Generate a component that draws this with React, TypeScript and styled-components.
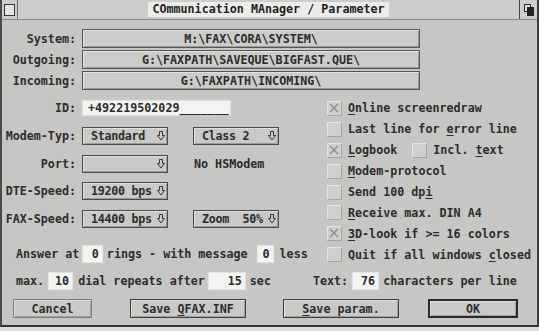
import React from 'react';
import styled, { createGlobalStyle } from 'styled-components';

const GlobalStyle = createGlobalStyle`
  html, body {
    margin: 0;
    padding: 0;
    background: #dcdcda;
  }
  body {
    font-family: "DejaVu Sans Mono", "Liberation Mono", monospace;
    font-weight: bold;
    font-size: 11.7px;
    color: #2c2c2c;
  }
`;

const Window = styled.div`
  width: 539px;
  box-sizing: border-box;
  background: #c6c6c4;
  border-left: 2px solid #4a4a4a;
  border-right: 2px solid #3c3c3c;
  border-bottom: 2px solid #333;
`;

const TitleBar = styled.div`
  height: 19px;
  display: grid;
  grid-template-columns: 16px 1fr 18px;
  background: #cdcdcb;
  border-bottom: 1px solid #8a8a88;
`;

const CloseCell = styled.div`
  display: flex;
  align-items: center;
  justify-content: center;
  border-right: 1px solid #6a6a6a;
`;

const CloseBox = styled.div`
  width: 9px;
  height: 10px;
  border: 1px solid #333;
  background: #e6e6e4;
`;

const TitleCell = styled.div`
  display: flex;
  align-items: center;
  justify-content: center;
`;

const Title = styled.div`
  height: 15px;
  line-height: 15px;
  padding: 0 4px;
  background: #ececea;
  color: #222;
  white-space: pre;
`;

const FullCell = styled.div`
  display: flex;
  align-items: center;
  justify-content: center;
  border-left: 1px solid #444;
`;

const Body = styled.div`
  padding: 9px 0 7px 0;
`;

const PathList = styled.div`
  display: flex;
  flex-direction: column;
  gap: 2px;
`;

const Row = styled.div<{ $h?: number; $mt?: number }>`
  display: flex;
  align-items: center;
  height: ${p => p.$h ?? 18}px;
  margin-top: ${p => p.$mt ?? 0}px;
  white-space: pre;
`;

const Label = styled.div`
  width: 74px;
  text-align: right;
  margin-right: 6px;
`;

const PathField = styled.div`
  width: 338px;
  height: 19px;
  box-sizing: border-box;
  display: flex;
  align-items: center;
  justify-content: center;
  background: #cbcbc9;
  border: 1px solid #555;
  box-shadow: inset 1px 1px 0 #e2e2e0, inset -1px -1px 0 #9c9c9a;
`;

const Columns = styled.div`
  display: flex;
  margin-top: 8px;
`;

const LeftCol = styled.div`
  width: 325px;
  display: flex;
  flex-direction: column;
`;

const RightCol = styled.div`
  flex: 1;
  display: flex;
  flex-direction: column;
`;

const TextInput = styled.div`
  width: 147px;
  height: 14px;
  margin-left: 1px;
  box-sizing: border-box;
  padding-left: 5px;
  display: flex;
  align-items: center;
  background: #f3f3f1;
  box-shadow: 0 0 1px 1px #e0e0de;
`;

const Popup = styled.div<{ $ml?: number }>`
  width: 86px;
  height: 18px;
  margin-left: ${p => p.$ml ?? 0}px;
  box-sizing: border-box;
  padding: 0 2px 0 8px;
  display: flex;
  align-items: center;
  justify-content: space-between;
  background: #c9c9c7;
  border: 1px solid #4a4a4a;
  box-shadow: inset 1px 1px 0 #dedede, inset -1px -1px 0 #9a9a98;
`;

const PopupText = styled.span`
  letter-spacing: -0.3px;
`;

const Note = styled.div<{ $ml?: number }>`
  margin-left: ${p => p.$ml ?? 0}px;
`;

const Text = styled.span<{ $ml?: number }>`
  margin-left: ${p => p.$ml ?? 0}px;
  white-space: pre;
`;

const NumBox = styled.div<{ $w: number; $ml?: number }>`
  width: ${p => p.$w}px;
  height: 16px;
  margin-left: ${p => p.$ml ?? 0}px;
  box-sizing: border-box;
  padding-right: 3px;
  display: flex;
  align-items: center;
  justify-content: flex-end;
  background: #f3f3f1;
  box-shadow: 0 0 1px 1px #e2e2e0;
`;

const CheckRow = styled.div`
  height: 20.9px;
  display: flex;
  align-items: center;
  white-space: pre;
`;

const Box = styled.div<{ $ml?: number }>`
  width: 15px;
  height: 15px;
  margin-left: ${p => p.$ml ?? 0}px;
  margin-right: 6px;
  box-sizing: border-box;
  background: #d0d0ce;
  border-top: 1px solid #e6e6e4;
  border-left: 1px solid #e6e6e4;
  border-right: 1px solid #a4a4a2;
  border-bottom: 1px solid #a4a4a2;
  display: flex;
  align-items: center;
  justify-content: center;
`;

const U = styled.span`
  text-decoration: underline;
  text-underline-offset: 2px;
  text-decoration-thickness: 1px;
`;

const Sentence = styled.div`
  display: flex;
  align-items: center;
  height: 17px;
  margin-top: 7px;
  padding-left: 14px;
  white-space: pre;
`;

const ButtonRow = styled.div`
  display: flex;
  align-items: center;
  height: 19px;
  margin-top: 10px;
  padding-left: 11px;
`;

const Button = styled.div<{ $w: number; $ml?: number; $kind?: 'soft' | 'default' }>`
  width: ${p => p.$w}px;
  height: 19px;
  margin-left: ${p => p.$ml ?? 0}px;
  box-sizing: border-box;
  display: flex;
  align-items: center;
  justify-content: center;
  white-space: pre;
  background: #c9c9c7;
  border: ${p => (p.$kind === 'default' ? '2px solid #2a2a2a' : p.$kind === 'soft' ? '1px solid #7e7e7c' : '1px solid #3e3e3e')};
  box-shadow: inset 1px 1px 0 #dcdcda, inset -1px -1px 0 #a0a09e;
`;

const DownArrow = () => (
  <svg width="8" height="10" viewBox="0 0 8 10">
    <path d="M2.5 0.5 H5.5 V4.5 H7.5 L4 9 L0.5 4.5 H2.5 Z" fill="none" stroke="#333" strokeWidth="1" />
  </svg>
);

const CrossMark = () => (
  <svg width="11" height="11" viewBox="0 0 11 11">
    <path d="M1 1 L9 9 M9 1 L1 9" stroke="#8f8f8d" strokeWidth="1.6" />
  </svg>
);

const FullIcon = () => (
  <svg width="10" height="12" viewBox="0 0 10 12">
    <rect x="0.5" y="0.5" width="6" height="7" fill="#e6e6e4" stroke="#222" />
    <rect x="3" y="3" width="7" height="9" fill="#222" />
  </svg>
);

const Check: React.FC<{ on?: boolean; children: React.ReactNode }> = ({ on, children }) => (
  <CheckRow>
    <Box>{on && <CrossMark />}</Box>
    {children}
  </CheckRow>
);

const App: React.FC = () => {
  const paths = [
    ['System:', 'M:\\FAX\\CORA\\SYSTEM\\'],
    ['Outgoing:', 'G:\\FAXPATH\\SAVEQUE\\BIGFAST.QUE\\'],
    ['Incoming:', 'G:\\FAXPATH\\INCOMING\\'],
  ];

  return (
    <>
      <GlobalStyle />
      <Window>
        <TitleBar>
          <CloseCell>
            <CloseBox />
          </CloseCell>
          <TitleCell>
            <Title>COmmunication MAnager / Parameter</Title>
          </TitleCell>
          <FullCell>
            <FullIcon />
          </FullCell>
        </TitleBar>
        <Body>
          <PathList>
            {paths.map(([label, value]) => (
              <Row key={label} $h={19}>
                <Label>{label}</Label>
                <PathField>{value}</PathField>
              </Row>
            ))}
          </PathList>

          <Columns>
            <LeftCol>
              <Row $h={20}>
                <Label>ID:</Label>
                <TextInput>+492219502029_______</TextInput>
              </Row>
              <Row $mt={9}>
                <Label>Modem-Typ:</Label>
                <Popup><PopupText>Standard</PopupText><DownArrow /></Popup>
                <Popup $ml={25}><PopupText>Class 2</PopupText><DownArrow /></Popup>
              </Row>
              <Row $mt={9.7}>
                <Label>Port:</Label>
                <Popup><span /><DownArrow /></Popup>
                <Note $ml={26}>No HSModem</Note>
              </Row>
              <Row $mt={9.7}>
                <Label>DTE-Speed:</Label>
                <Popup><PopupText>19200 bps</PopupText><DownArrow /></Popup>
              </Row>
              <Row $mt={9.7}>
                <Label>FAX-Speed:</Label>
                <Popup><PopupText>14400 bps</PopupText><DownArrow /></Popup>
                <Popup $ml={25}><PopupText>Zoom  50%</PopupText><DownArrow /></Popup>
              </Row>
              <Row $mt={17}>
                <Text $ml={14}>Answer at</Text>
                <NumBox $w={19} $ml={3.5}>0</NumBox>
                <Text $ml={5}>rings - with message</Text>
                <NumBox $w={15} $ml={10}>0</NumBox>
                <Text $ml={7}>less</Text>
              </Row>
            </LeftCol>

            <RightCol>
              <Check on><U>O</U>nline screenredraw</Check>
              <Check>Last line for <U>e</U>rror line</Check>
              <CheckRow>
                <Box><CrossMark /></Box>
                <U>L</U>ogbook
                <Box $ml={15}></Box>
                Incl. <U>t</U>ext
              </CheckRow>
              <Check><U>M</U>odem-protocol</Check>
              <Check>Send 100 dp<U>i</U></Check>
              <Check><U>R</U>eceive max. DIN A4</Check>
              <Check on><U>3</U>D-look if &gt;= 16 colors</Check>
              <Check>Quit if all windows <U>c</U>losed</Check>
            </RightCol>
          </Columns>

          <Sentence>
            <Text>max.</Text>
            <NumBox $w={23} $ml={5}>10</NumBox>
            <Text $ml={6}>dial repeats after</Text>
            <NumBox $w={36} $ml={4}>15</NumBox>
            <Text $ml={5}>sec</Text>
            <Text $ml={42}>Text:</Text>
            <NumBox $w={25} $ml={5}>76</NumBox>
            <Text $ml={5}>characters per line</Text>
          </Sentence>

          <ButtonRow>
            <Button $w={79} $kind="soft">Cancel</Button>
            <Button $w={116} $ml={38}>Save <U>Q</U>FAX.INF</Button>
            <Button $w={116} $ml={37}><U>S</U>ave param.</Button>
            <Button $w={90} $ml={29} $kind="default">OK</Button>
          </ButtonRow>
        </Body>
      </Window>
    </>
  );
};

export default App;
